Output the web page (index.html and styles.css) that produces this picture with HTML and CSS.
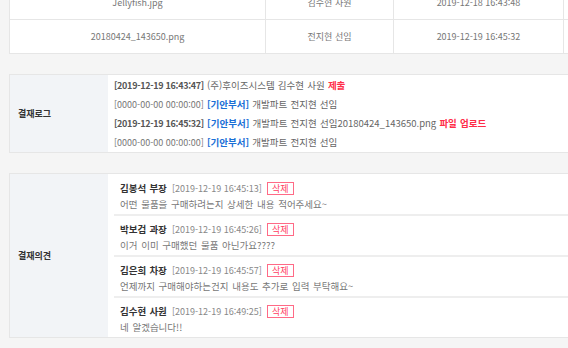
FILE: index.html
```html
<!DOCTYPE html>
<html lang="ko">
<head>
    <meta charset="UTF-8">
    <title>결재</title>
    <link rel="stylesheet" href="styles.css">
</head>
<body>
    <div class="page">
        <table class="file-table">
            <tr>
                <td class="col-name">Jellyfish.jpg</td>
                <td class="col-user">김수현 사원</td>
                <td class="col-date">2019-12-18 16:43:48</td>
                <td></td>
            </tr>
            <tr>
                <td class="col-name">20180424_143650.png</td>
                <td class="col-user">전지현 선임</td>
                <td class="col-date">2019-12-19 16:45:32</td>
                <td></td>
            </tr>
        </table>

        <div class="section">
            <div class="section-label">결재로그</div>
            <div class="section-body log">
                <div class="log-line"><b class="stamp">[2019-12-19 16:43:47]</b> (주)후이즈시스템 김수현 사원 <b class="red">제출</b></div>
                <div class="log-line"><span class="time">[0000-00-00 00:00:00]</span> <b class="blue">[기안부서]</b> 개발파트 전지현 선임</div>
                <div class="log-line"><b class="stamp">[2019-12-19 16:45:32]</b> <b class="blue">[기안부서]</b> 개발파트 전지현 선임20180424_143650.png <b class="red">파일 업로드</b></div>
                <div class="log-line"><span class="time">[0000-00-00 00:00:00]</span> <b class="blue">[기안부서]</b> 개발파트 전지현 선임</div>
            </div>
        </div>

        <div class="section">
            <div class="section-label">결재의견</div>
            <div class="section-body comments">
                <div class="comment">
                    <div class="comment-head">
                        <span class="writer">김봉석 부장</span>
                        <span class="date">[2019-12-19 16:45:13]</span>
                        <button class="del">삭제</button>
                    </div>
                    <div class="comment-text">어떤 물품을 구매하려는지 상세한 내용 적어주세요~</div>
                </div>
                <div class="comment">
                    <div class="comment-head">
                        <span class="writer">박보검 과장</span>
                        <span class="date">[2019-12-19 16:45:26]</span>
                        <button class="del">삭제</button>
                    </div>
                    <div class="comment-text">이거 이미 구매했던 물품 아닌가요????</div>
                </div>
                <div class="comment">
                    <div class="comment-head">
                        <span class="writer">김은희 차장</span>
                        <span class="date">[2019-12-19 16:45:57]</span>
                        <button class="del">삭제</button>
                    </div>
                    <div class="comment-text">언제까지 구매해야하는건지 내용도 추가로 입력 부탁해요~</div>
                </div>
                <div class="comment">
                    <div class="comment-head">
                        <span class="writer">김수현 사원</span>
                        <span class="date">[2019-12-19 16:49:25]</span>
                        <button class="del">삭제</button>
                    </div>
                    <div class="comment-text">네 알겠습니다!!</div>
                </div>
            </div>
        </div>
    </div>
</body>
</html>
```

FILE: styles.css
```css
html, body {
    margin: 0;
    overflow: hidden;
}
body {
    font-family: "Noto Sans CJK KR", "Noto Sans", sans-serif;
    font-size: 9.5px;
    color: #666;
    background-color: #f5f5f5;
}
.page {
    width: 620px;
    margin: -15px 0 0 9px;
}
.file-table {
    width: 100%;
    border-collapse: collapse;
    background-color: #fff;
    table-layout: fixed;
    font-size: 9px;
}
.file-table td {
    height: 33px;
    padding: 0;
    border: 1px solid #e6e6e6;
    text-align: center;
    color: #777;
}
.col-name {
    width: 255px;
}
.col-user {
    width: 127px;
}
.col-date {
    width: 169px;
}
.section {
    display: flex;
    margin-top: 20px;
    border: 1px solid #e6e6e6;
    background-color: #fff;
}
.section-label {
    width: 90px;
    padding-left: 8px;
    display: flex;
    align-items: center;
    font-size: 9px;
    font-weight: bold;
    color: #333;
    background-color: #f2f4f7;
}
.section-body {
    flex: 1;
}
.log {
    padding: 1px 6px 0;
}
.log-line {
    line-height: 19px;
    white-space: nowrap;
    word-spacing: 0.5px;
}
.time {
    font-size: 9px;
    word-spacing: 0;
    color: #777;
}
.stamp {
    font-size: 9px;
    letter-spacing: -0.3px;
    word-spacing: 0;
    color: #555;
}
.blue {
    color: #1a6fd6;
}
.red {
    color: #ff2d48;
}
.comments {
    padding: 1px 6px 0;
}
.comment {
    padding: 5px 6px 2px;
    border-bottom: 2px solid #eee;
}
.comment:last-child {
    border-bottom: none;
}
.comment-head {
    display: flex;
    align-items: center;
    gap: 5px;
    height: 16px;
}
.writer {
    font-weight: bold;
    color: #333;
    word-spacing: 0.5px;
}
.date {
    font-size: 9px;
    color: #888;
}
.del {
    font-family: inherit;
    font-size: 9px;
    height: 13px;
    width: 27px;
    padding: 0;
    line-height: 11px;
    color: #ff3d62;
    background-color: #fff;
    border: 1px solid #ff6a86;
    border-radius: 0;
}
.comment-text {
    line-height: 16px;
    color: #777;
    word-spacing: 1px;
}
```
